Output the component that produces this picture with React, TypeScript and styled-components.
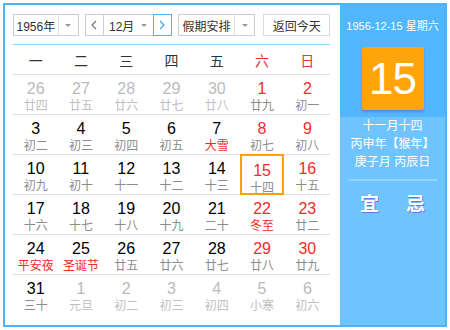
import * as React from "react";
import styled, { createGlobalStyle } from "styled-components";

const GlobalStyle = createGlobalStyle`
  body {
    margin: 0;
    background: #fff;
    font-family: "Liberation Sans", "Noto Sans CJK SC", sans-serif;
  }
`;

const SFrame = styled.div`
  box-sizing: border-box;
  margin: 3px;
  width: 444px;
  height: 324px;
  border: 2px solid #4fb2f8;
  display: flex;
`;

const SMain = styled.div`
  width: 335px;
  padding: 9px 10px 0 8px;
  box-sizing: border-box;
`;

const SToolbar = styled.div`
  display: flex;
  align-items: center;
  height: 22px;
`;

const SSelect = styled.div<{ width: number }>`
  box-sizing: border-box;
  width: ${({ width }) => width}px;
  height: 22px;
  border: 1px solid #cfcfcf;
  display: flex;
  align-items: stretch;
  font-size: 12px;
  color: #333;
`;

const SSelectText = styled.div`
  flex: 1;
  display: flex;
  align-items: center;
  justify-content: center;
`;

const SArrowBox = styled.div`
  width: 19px;
  border-left: 1px solid #e0e0e0;
  display: flex;
  align-items: center;
  justify-content: center;
`;

const SCaret = styled.span`
  width: 0;
  height: 0;
  border-left: 3px solid transparent;
  border-right: 3px solid transparent;
  border-top: 3px solid #999;
`;

const SMonthGroup = styled.div`
  margin: 0 6px;
  display: flex;
  height: 22px;
`;

const SNavBtn = styled.div<{ active?: boolean }>`
  box-sizing: border-box;
  width: 19px;
  height: 22px;
  border: 1px solid ${({ active }) => (active ? "#4fb2f8" : "#cfcfcf")};
  display: flex;
  align-items: center;
  justify-content: center;
`;

const SMonthSelect = styled.div`
  box-sizing: border-box;
  width: 49px;
  height: 22px;
  border-top: 1px solid #cfcfcf;
  border-bottom: 1px solid #cfcfcf;
  display: flex;
  align-items: center;
  justify-content: center;
  gap: 7px;
  font-size: 12px;
  color: #333;
`;

const STodayBtn = styled.div`
  box-sizing: border-box;
  margin-left: 8px;
  width: 67px;
  height: 22px;
  border: 1px solid #dcdcdc;
  display: flex;
  align-items: center;
  justify-content: center;
  font-size: 12px;
  color: #333;
`;

const SBlueLine = styled.div`
  margin-top: 8px;
  height: 1px;
  background: #92d2fb;
`;

const SRow = styled.div<{ head?: boolean; last?: boolean }>`
  display: grid;
  grid-template-columns: repeat(7, 1fr);
  box-sizing: border-box;
  height: ${({ head }) => (head ? 30 : 40)}px;
  border-bottom: ${({ last }) => (last ? "none" : "1px solid #dedede")};
`;

const SWeekday = styled.div<{ red?: boolean }>`
  display: flex;
  align-items: center;
  justify-content: center;
  font-size: 14px;
  color: ${({ red }) => (red ? "#f23030" : "#333")};
`;

const SCell = styled.div<{ selected?: boolean }>`
  box-sizing: border-box;
  margin: ${({ selected }) => (selected ? "-1px 1px 0" : "0")};
  padding-top: ${({ selected }) => (selected ? 6 : 5)}px;
  border: ${({ selected }) => (selected ? "2px solid #ffa00a" : "none")};
  text-align: center;
  ${({ selected }) => (selected ? "height: 41px;" : "")}
`;

const SNum = styled.div<{ tone: string }>`
  font-size: 16px;
  line-height: 18px;
  color: ${({ tone }) => tone};
`;

const SLunar = styled.div<{ tone: string }>`
  margin-top: 1px;
  font-size: 12px;
  line-height: 14px;
  color: ${({ tone }) => tone};
`;

const SSide = styled.div`
  flex: 1;
  display: flex;
  flex-direction: column;
  background: #70c4fe;
  color: #fff;
`;

const SSideTop = styled.div`
  height: 112px;
  background: #52b6fd;
  display: flex;
  flex-direction: column;
  align-items: center;
`;

const SDateLine = styled.div`
  margin-top: 14px;
  font-size: 11px;
  line-height: 14px;
`;

const SDayBox = styled.div`
  margin-top: 14px;
  width: 62px;
  height: 63px;
  border-radius: 2px;
  background: #ffa40a;
  box-shadow: 0 2px 2px rgba(110, 90, 220, 0.55);
  display: flex;
  align-items: center;
  justify-content: center;
  font-size: 44px;
  letter-spacing: -1px;
  color: #fff;
`;

const SInfo = styled.div`
  text-align: center;
  font-size: 12px;
  line-height: 18px;
`;

const SSideRule = styled.div`
  margin: 8px 8px 0;
  height: 2px;
  background: #8fd3ff;
`;

const SLuck = styled.div`
  margin-top: 13px;
  display: flex;
  justify-content: center;
  gap: 27px;
  font-size: 19px;
  line-height: 22px;
  font-weight: bold;
  text-shadow: 1px 1px 0 #6b70f0;
`;

const Chevron = ({ dir, color }: { dir: "l" | "r"; color: string }) => (
  <svg width="6" height="10" viewBox="0 0 6 10">
    <polyline
      points={dir === "l" ? "5,1 1,5 5,9" : "1,1 5,5 1,9"}
      fill="none"
      stroke={color}
      strokeWidth="1.2"
    />
  </svg>
);

type Day = [number, string, ("o" | "f" | "s" | "")?];

const weeks: Day[][] = [
  [[26, "廿四", "o"], [27, "廿五", "o"], [28, "廿六", "o"], [29, "廿七", "o"], [30, "廿八", "o"], [1, "廿九"], [2, "初一"]],
  [[3, "初二"], [4, "初三"], [5, "初四"], [6, "初五"], [7, "大雪", "f"], [8, "初七"], [9, "初八"]],
  [[10, "初九"], [11, "初十"], [12, "十一"], [13, "十二"], [14, "十三"], [15, "十四", "s"], [16, "十五"]],
  [[17, "十六"], [18, "十七"], [19, "十八"], [20, "十九"], [21, "二十"], [22, "冬至", "f"], [23, "廿二"]],
  [[24, "平安夜", "f"], [25, "圣诞节", "f"], [26, "廿五"], [27, "廿六"], [28, "廿七"], [29, "廿八"], [30, "廿九"]],
  [[31, "三十"], [1, "元旦", "o"], [2, "初二", "o"], [3, "初三", "o"], [4, "初四", "o"], [5, "小寒", "o"], [6, "初六", "o"]],
];

const RED = "#f52a2a";

const App = () => (
  <>
    <GlobalStyle />
    <SFrame>
      <SMain>
        <SToolbar>
          <SSelect width={66}>
            <SSelectText>1956年</SSelectText>
            <SArrowBox>
              <SCaret />
            </SArrowBox>
          </SSelect>
          <SMonthGroup>
            <SNavBtn>
              <Chevron dir="l" color="#777" />
            </SNavBtn>
            <SMonthSelect>
              12月
              <SCaret />
            </SMonthSelect>
            <SNavBtn active>
              <Chevron dir="r" color="#3aa6f5" />
            </SNavBtn>
          </SMonthGroup>
          <SSelect width={78}>
            <SSelectText>假期安排</SSelectText>
            <SArrowBox>
              <SCaret />
            </SArrowBox>
          </SSelect>
          <STodayBtn>返回今天</STodayBtn>
        </SToolbar>
        <SBlueLine />
        <SRow head>
          {["一", "二", "三", "四", "五", "六", "日"].map((w, i) => (
            <SWeekday key={w} red={i > 4}>
              {w}
            </SWeekday>
          ))}
        </SRow>
        {weeks.map((week, wi) => (
          <SRow key={wi} last={wi === weeks.length - 1}>
            {week.map(([n, lunar, kind], di) => {
              const other = kind === "o";
              const weekend = di > 4;
              const numTone = other ? "#bbbbbb" : weekend ? RED : "#000";
              const lunarTone = other ? "#c0c0c0" : kind === "f" ? RED : "#8c8c8c";
              return (
                <SCell key={di} selected={kind === "s"}>
                  <SNum tone={numTone}>{n}</SNum>
                  <SLunar tone={lunarTone}>{lunar}</SLunar>
                </SCell>
              );
            })}
          </SRow>
        ))}
      </SMain>
      <SSide>
        <SSideTop>
          <SDateLine>1956-12-15 星期六</SDateLine>
          <SDayBox>15</SDayBox>
        </SSideTop>
        <SInfo>
          <div>十一月十四</div>
          <div>丙申年【猴年】</div>
          <div>庚子月 丙辰日</div>
        </SInfo>
        <SSideRule />
        <SLuck>
          <span>宜</span>
          <span>忌</span>
        </SLuck>
      </SSide>
    </SFrame>
  </>
);

export default App;
